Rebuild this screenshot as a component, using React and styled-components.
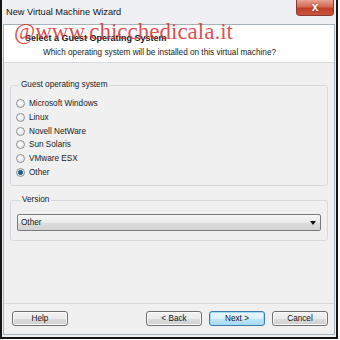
import React from "react";
import styled, { createGlobalStyle } from "styled-components";

const GlobalStyle = createGlobalStyle`
  html, body {
    margin: 0;
    padding: 0;
    background: #ffffff;
  }
  * {
    box-sizing: border-box;
  }
`;

const osList = [
  "Microsoft Windows",
  "Linux",
  "Novell NetWare",
  "Sun Solaris",
  "VMware ESX",
  "Other",
];

export default function App() {
  return (
    <>
      <GlobalStyle />
      <Window>
        <TitleBar>
          <span>New Virtual Machine Wizard</span>
          <CloseButton>x</CloseButton>
        </TitleBar>

        <Panel>
          <Header>
            <HeaderTitle>Select a Guest Operating System</HeaderTitle>
            <HeaderSub>
              Which operating system will be installed on this virtual machine?
            </HeaderSub>
          </Header>

          <Body>
            <Group>
              <Legend>Guest operating system</Legend>
              <RadioList>
                {osList.map((os) => (
                  <RadioRow key={os}>
                    <Radio $checked={os === "Other"} />
                    <span>{os}</span>
                  </RadioRow>
                ))}
              </RadioList>
            </Group>

            <Group $version>
              <Legend>Version</Legend>
              <Select>
                <span>Other</span>
                <Arrow />
              </Select>
            </Group>
          </Body>

          <Footer>
            <Button>Help</Button>
            <Spacer />
            <Button>&lt; Back</Button>
            <Button $default>Next &gt;</Button>
            <Button>Cancel</Button>
          </Footer>
        </Panel>

        <Watermark>@www.chicchedicala.it</Watermark>
      </Window>
    </>
  );
}

const Window = styled.div`
  position: relative;
  width: 338px;
  height: 339px;
  display: flex;
  flex-direction: column;
  background: #eef0f3;
  border-left: 2px solid #151515;
  border-right: 2px solid #151515;
  border-bottom: 2px solid #151515;
  font-family: "Liberation Sans", Arial, sans-serif;
  color: #1a1a1a;
`;

const TitleBar = styled.div`
  position: relative;
  height: 24px;
  display: flex;
  align-items: center;
  padding-left: 4px;
  padding-bottom: 1px;
  font-size: 9.2px;
  color: #111;
`;

const CloseButton = styled.div`
  position: absolute;
  top: 0;
  right: 2px;
  width: 38px;
  height: 16px;
  display: flex;
  align-items: center;
  justify-content: center;
  border: 1px solid #8d3a2e;
  border-top: none;
  border-radius: 0 0 4px 4px;
  background: linear-gradient(#e7a395, #d36a55 45%, #c0402a 55%, #c9563f);
  color: #fff;
  font-size: 12px;
  font-weight: bold;
  line-height: 1;
  padding-bottom: 2px;
  text-shadow: 0 0 2px #7a1c10;
`;

const Panel = styled.div`
  flex: 1;
  display: flex;
  flex-direction: column;
  margin: 0 1px 2px 1px;
  border: 1px solid #a9b1b9;
  background: #f0f0f0;
`;

const Header = styled.div`
  height: 38px;
  background: #ffffff;
  border-bottom: 1px solid #d6dbe0;
  padding: 8px 0 0 21px;
`;

const HeaderTitle = styled.div`
  font-size: 9px;
  font-weight: bold;
  line-height: 11px;
`;

const HeaderSub = styled.div`
  font-size: 8.2px;
  line-height: 10px;
  margin: 4px 0 0 18px;
`;

const Body = styled.div`
  flex: 1;
  display: flex;
  flex-direction: column;
  gap: 9px;
  padding: 17px 6px 0 6px;
`;

const Group = styled.fieldset`
  margin: 0;
  padding: ${(p) => (p.$version ? "9px 6px 9px 6px" : "7px 6px 6px 5px")};
  border: 1px solid #d5dadf;
  border-radius: 3px;
  min-width: 0;
`;

const Legend = styled.legend`
  padding: 0 2px;
  margin-left: 3px;
  font-size: 8.2px;
  line-height: 10px;
`;

const RadioList = styled.div`
  display: flex;
  flex-direction: column;
`;

const RadioRow = styled.div`
  height: 13.7px;
  display: flex;
  align-items: center;
  gap: 4px;
  font-size: 8.2px;
`;

const Radio = styled.span`
  width: 9px;
  height: 9px;
  border-radius: 50%;
  border: 1px solid #8b9097;
  background: ${(p) =>
    p.$checked
      ? "radial-gradient(circle, #1f4f78 0, #2d6b9c 2.2px, #dfe9f2 2.8px, #f4f4f4 100%)"
      : "radial-gradient(circle at 40% 40%, #ffffff, #dcdcdc)"};
  flex-shrink: 0;
`;

const Select = styled.div`
  height: 17px;
  display: flex;
  align-items: center;
  justify-content: space-between;
  padding: 0 4px 0 3px;
  border: 1px solid #7a7a7a;
  border-radius: 2px;
  background: linear-gradient(#f6f6f6, #e9e9e9 50%, #dcdcdc 51%, #d4d4d4);
  font-size: 8.2px;
`;

const Arrow = styled.span`
  width: 0;
  height: 0;
  border-left: 3px solid transparent;
  border-right: 3px solid transparent;
  border-top: 4px solid #111;
`;

const Footer = styled.div`
  height: 31px;
  display: flex;
  align-items: flex-start;
  gap: 7px;
  padding: 7px 6px 0 8px;
  border-top: 1px solid #dadada;
`;

const Spacer = styled.div`
  flex: 1;
`;

const Button = styled.div`
  width: 56px;
  height: 15px;
  display: flex;
  align-items: center;
  justify-content: center;
  border: 1px solid ${(p) => (p.$default ? "#3d7bad" : "#707070")};
  border-radius: 3px;
  background: ${(p) =>
    p.$default
      ? "linear-gradient(#eaf6fd, #d9f0fc 50%, #bee6fd 51%, #a7d9f5)"
      : "linear-gradient(#f2f2f2, #ebebeb 50%, #dddddd 51%, #cfcfcf)"};
  box-shadow: inset 0 0 0 1px ${(p) => (p.$default ? "#9fdcf5" : "#fbfbfb")};
  font-size: 8.2px;
  color: #111;
`;

const Watermark = styled.div`
  position: absolute;
  left: 12px;
  top: 20px;
  font-family: "Liberation Serif", "Times New Roman", serif;
  font-size: 23px;
  line-height: 24px;
  color: rgba(212, 40, 40, 0.82);
  pointer-events: none;
`;
